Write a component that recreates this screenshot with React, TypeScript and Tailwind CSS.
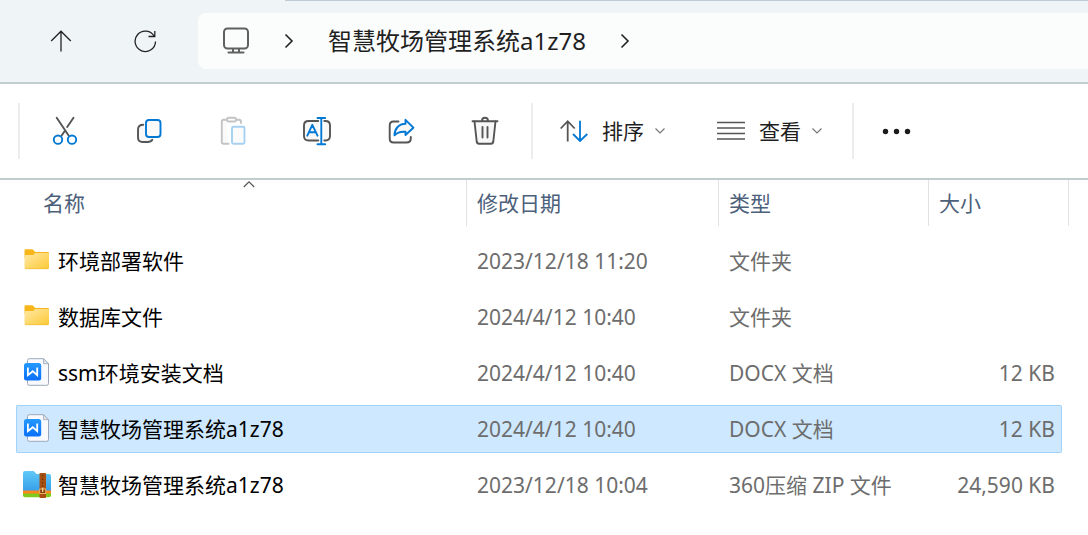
import type { ReactNode } from 'react'
import clsx from 'clsx'

type FileKind = 'folder' | 'docx' | 'zip'

type FileItem = {
  kind: FileKind
  name: string
  modified: string
  type: string
  size?: string
  selected?: boolean
}

const files: FileItem[] = [
  { kind: 'folder', name: '环境部署软件', modified: '2023/12/18 11:20', type: '文件夹' },
  { kind: 'folder', name: '数据库文件', modified: '2024/4/12 10:40', type: '文件夹' },
  { kind: 'docx', name: 'ssm环境安装文档', modified: '2024/4/12 10:40', type: 'DOCX 文档', size: '12 KB' },
  {
    kind: 'docx',
    name: '智慧牧场管理系统a1z78',
    modified: '2024/4/12 10:40',
    type: 'DOCX 文档',
    size: '12 KB',
    selected: true,
  },
  {
    kind: 'zip',
    name: '智慧牧场管理系统a1z78',
    modified: '2023/12/18 10:04',
    type: '360压缩 ZIP 文件',
    size: '24,590 KB',
  },
]

function ToolIcon({ children }: { children: ReactNode }) {
  return (
    <svg
      viewBox="0 0 32 32"
      className="size-8"
      fill="none"
      stroke="#555555"
      strokeWidth="1.9"
      strokeLinecap="round"
      strokeLinejoin="round"
      aria-hidden="true"
    >
      {children}
    </svg>
  )
}

const tools = [
  {
    label: '剪切',
    icon: (
      <ToolIcon>
        <path d="M7.7 2.8 19.8 20.8M24.5 2.8 18.2 12M15.4 16.4 12.5 20.8" />
        <circle cx="9" cy="24.7" r="4.2" stroke="#0078d4" />
        <circle cx="23" cy="24.7" r="4.2" stroke="#0078d4" />
      </ToolIcon>
    ),
  },
  {
    label: '复制',
    icon: (
      <ToolIcon>
        <path d="M10.3 9.8C7 9.8 5 11.5 5 14.5v8C5 25.5 6.5 27 9.5 27h5c2.5 0 4-.7 4.8-2.2" fill="#f8f8f8" />
        <rect x="13" y="5" width="14.5" height="17" rx="3" stroke="#0078d4" fill="#fafafa" />
      </ToolIcon>
    ),
  },
  {
    label: '粘贴',
    disabled: true,
    icon: (
      <ToolIcon>
        <g stroke="#c4c4c4">
          <path d="M9.5 4.7H6.5Q4.8 4.7 4.8 6.5V27Q4.8 28.8 6.5 28.8H11.5M19.5 4.7H22Q24 4.7 24 6.5V8" fill="#fafafa" />
          <rect x="10" y="2.7" width="9" height="3.8" rx="1.8" fill="#ffffff" />
        </g>
        <rect x="15" y="11.7" width="12.5" height="17" rx="1.5" stroke="#a6d1f2" fill="#fbfbfb" />
      </ToolIcon>
    ),
  },
  {
    label: '重命名',
    icon: (
      <ToolIcon>
        <path d="M17.3 6H7.5Q3 6 3 10.5V21Q3 25.5 7.5 25.5H17.3M23.3 6H24.5Q29 6 29 10.5V21Q29 25.5 24.5 25.5H23.3" fill="#f8f8f8" />
        <path d="M20.3 3V29.3M16.5 3H24.2M16.5 29.3H24.2M6.3 20.7 11.3 9.8 16.5 20.7M8 17.3H14.8" stroke="#0078d4" />
      </ToolIcon>
    ),
  },
  {
    label: '共享',
    icon: (
      <ToolIcon>
        <path d="M13.5 6.5H8.5Q4.7 6.5 4.7 10.5V23.5Q4.7 27.5 8.5 27.5H21.5Q25.8 27.5 25.8 23.5V22" />
        <path d="M20.5 4.8 28.4 12.7 20.5 20V16.8C15 16.3 12 17.8 9.5 20.3 9.5 14 13.5 9 20.5 8.8Z" stroke="#0078d4" fill="#f8f8f8" />
      </ToolIcon>
    ),
  },
  {
    label: '删除',
    icon: (
      <ToolIcon>
        <path d="M5.5 6.5 7.7 26.5Q8 28.7 10 28.7H22Q24 28.7 24.3 26.5L26.5 6.5" fill="#f8f8f8" />
        <path d="M3.5 6.3H28.5M13 6Q13 2.8 16 2.8T19 6M13.5 12V22.5M18.5 12V22.5" />
      </ToolIcon>
    ),
  },
]

function ChevronRight() {
  return (
    <svg viewBox="0 0 12 18" className="h-[18px] w-3" fill="none" stroke="#222222" strokeWidth="1.6" aria-hidden="true">
      <path d="M2.5 2.5 9 9 2.5 15.5" />
    </svg>
  )
}

function ChevronDown() {
  return (
    <svg viewBox="0 0 12 8" className="h-2 w-3" fill="none" stroke="#777777" strokeWidth="1.2" aria-hidden="true">
      <path d="M1.5 1.5 6 6 10.5 1.5" />
    </svg>
  )
}

function Divider() {
  return <div className="h-14 w-0.5 shrink-0 bg-[#ededed]" />
}

function FileIcon({ kind }: { kind: FileKind }) {
  if (kind === 'folder') {
    return (
      <svg viewBox="0 0 30 30" className="size-[30px] shrink-0" aria-hidden="true">
        <defs>
          <linearGradient id="folder-front" x1="0" y1="0" x2="1" y2="1">
            <stop offset="0" stopColor="#ffe9a6" />
            <stop offset="1" stopColor="#fdc936" />
          </linearGradient>
        </defs>
        <path d="M2.5 4.5Q2.5 3.2 4 3.2H10.5L13.3 6H26Q27 6 27 7V12H2.5Z" fill="#f9b61a" />
        <path d="M2.5 9H10.5Q11.5 9 12.2 8.2L13.3 7H26Q27 7 27 8V21.8Q27 23 25.8 23H3.7Q2.5 23 2.5 21.8Z" fill="url(#folder-front)" />
        <path d="M3 22.7H26.5" stroke="#efb92e" strokeWidth=".6" />
      </svg>
    )
  }
  if (kind === 'docx') {
    return (
      <svg viewBox="0 1 30 30" className="size-[30px] shrink-0" aria-hidden="true">
        <defs>
          <linearGradient id="doc-badge" x1="0" y1="0" x2="0" y2="1">
            <stop offset="0" stopColor="#2399ff" />
            <stop offset="1" stopColor="#0b70fa" />
          </linearGradient>
        </defs>
        <path d="M7.5 1.7H21.5L26.5 6.7V26.5Q26.5 28.3 24.7 28.3H7.3Q5.5 28.3 5.5 26.5V3.5Q5.5 1.7 7.5 1.7Z" fill="#f8faff" stroke="#9ba7b8" />
        <path d="M21.5 1.7V6.7H26.5Z" fill="#e1e6ed" stroke="#9ba7b8" strokeWidth=".8" />
        <rect x="2" y="6" width="17.2" height="17.5" rx="2.5" fill="url(#doc-badge)" />
        <path d="M5.9 10.6V18.2L10.8 14.2 15.2 18.2V10.6" fill="none" stroke="#ffffff" strokeWidth="1.8" />
      </svg>
    )
  }
  return (
    <svg viewBox="0 1 30 30" className="size-[30px] shrink-0" aria-hidden="true">
      <defs>
        <linearGradient id="zip-front" x1="0" y1="0" x2="0" y2="1">
          <stop offset="0" stopColor="#62c9f8" />
          <stop offset="1" stopColor="#37a0ea" />
        </linearGradient>
      </defs>
      <path d="M1 16H29V26.3Q29 28.3 27 28.3H3Q1 28.3 1 26.3Z" fill="#82c91e" />
      <path d="M1 16H29V23.5Q29 24.5 28 24.5H2Q1 24.5 1 23.5Z" fill="#ff861c" />
      <path d="M1 4Q1 2 3 2H11Q12 2 13 3.2L14.5 5H27Q29 5 29 7V21.5H1Z" fill="url(#zip-front)" />
      <rect x="17.5" y="4" width="6.5" height="25" rx=".8" fill="#a84f12" />
      <path d="M20.7 6V18" stroke="#5b2a09" strokeWidth="1" strokeDasharray="1.5 2" />
      <rect x="17.7" y="20" width="6" height="4.5" fill="#8a3f0d" stroke="#efc06c" strokeWidth=".9" />
      <path d="M20.7 18.5V23" stroke="#ffe0a0" strokeWidth="1.2" />
    </svg>
  )
}

function HeaderCell({ label }: { label: string }) {
  return (
    <th scope="col" className="h-[53px] p-0 align-top font-normal">
      <button type="button" className="flex h-[46px] w-full items-center border-r border-[#e2e2e2] px-2.5">
        {label}
      </button>
    </th>
  )
}

function FileRow({ file }: { file: FileItem }) {
  const cell = clsx(
    'flex h-12 items-center border-y',
    file.selected ? 'border-[#a0d2fb] bg-[#cde8ff]' : 'border-transparent',
  )

  return (
    <tr aria-selected={file.selected}>
      <td className="h-14 p-0">
        <div className={clsx(cell, 'gap-1.5 rounded-l-[2px] border-l pl-[5px] text-black')}>
          <FileIcon kind={file.kind} />
          {file.name}
        </div>
      </td>
      <td className="p-0">
        <div className={clsx(cell, 'px-2.5')}>{file.modified}</div>
      </td>
      <td className="p-0">
        <div className={clsx(cell, 'px-2.5')}>{file.type}</div>
      </td>
      <td className="p-0 pr-[7px]">
        <div className={clsx(cell, 'justify-end rounded-r-[2px] border-r pr-1.5')}>{file.size}</div>
      </td>
    </tr>
  )
}

export default function App() {
  return (
    <div className="min-h-screen bg-white font-['Noto_Sans','Noto_Sans_CJK_SC',sans-serif] text-[21px] leading-7 whitespace-nowrap text-[#6d6d6d]">
      <header className="border-b-2 border-[#c0cdd1] bg-[#eff4f7]">
        <div className="ml-[285px] h-px bg-[#bccbd4]" />
        <div className="flex items-center pt-3 pb-[13px] pl-[19px]">
          <button type="button" aria-label="向上" className="flex w-[84px] justify-center">
            <svg viewBox="0 0 24 24" className="size-6" fill="none" stroke="#222222" strokeWidth="1.3" aria-hidden="true">
              <path d="M12 22.5V2.5M2.2 12 12 2.2 21.8 12" />
            </svg>
          </button>
          <button type="button" aria-label="刷新" className="flex w-[84px] justify-center">
            <svg viewBox="0 0 24 24" className="size-6" fill="none" stroke="#222222" strokeWidth="1.3" aria-hidden="true">
              <path d="M21.3 7.5A10.2 10.2 0 1 0 22.5 12.5M21.8 2V7.5H15.5" />
            </svg>
          </button>
          <nav aria-label="地址" className="ml-[11px] flex h-14 grow items-center rounded-l-lg bg-[#fbfcfc] pl-6">
            <button type="button" aria-label="此电脑">
              <svg viewBox="0 0 28 28" className="size-7" fill="none" stroke="#606060" strokeWidth="2" strokeLinecap="round" aria-hidden="true">
                <rect x="2" y="1.5" width="24" height="20" rx="3.5" />
                <path d="M11 22V25.5M17 22V25.5M6.5 25.5H21.5" />
              </svg>
            </button>
            <span className="ml-[33px]">
              <ChevronRight />
            </span>
            <button type="button" className="ml-[33px] text-2xl text-[#1f1f1f]">
              智慧牧场管理系统a1z78
            </button>
            <span className="ml-[33px]">
              <ChevronRight />
            </span>
          </nav>
        </div>
      </header>

      <div role="toolbar" aria-label="命令栏" className="flex items-center border-b-2 border-[#c0cdcf] py-[19px] pl-[18px]">
        <Divider />
        <div className="flex pr-1 pl-[3px]">
          {tools.map((tool) => (
            <button
              key={tool.label}
              type="button"
              aria-label={tool.label}
              disabled={tool.disabled}
              className="flex w-[84px] justify-center"
            >
              {tool.icon}
            </button>
          ))}
        </div>
        <Divider />
        <div className="flex gap-[51px] pr-[29px] pl-[27px] text-[#1f1f1f]">
          <button type="button" className="flex items-center">
            <svg viewBox="0 0 28 28" className="size-7" fill="none" strokeWidth="1.8" aria-hidden="true">
              <path d="M7.7 24.5V4M.7 11.5 7.7 4.2 14.7 11.5" stroke="#555555" />
              <path d="M20 3.7V24M13 17 20 24 27.3 17" stroke="#0078d4" />
            </svg>
            <span className="mr-2.5 ml-3.5">排序</span>
            <ChevronDown />
          </button>
          <button type="button" className="flex items-center">
            <svg viewBox="0 0 28 28" className="size-7" fill="none" stroke="#555555" strokeWidth="1.7" aria-hidden="true">
              <path d="M0 5.5H28M0 11H28M0 16.5H28M0 22H28" />
            </svg>
            <span className="mr-2.5 ml-3.5">查看</span>
            <ChevronDown />
          </button>
        </div>
        <Divider />
        <button type="button" aria-label="查看更多" className="ml-[27px]">
          <svg viewBox="0 0 32 32" className="size-8" fill="#1b1b1b" aria-hidden="true">
            <circle cx="4.5" cy="16.5" r="2.7" />
            <circle cx="15.5" cy="16.5" r="2.7" />
            <circle cx="26.5" cy="16.5" r="2.7" />
          </svg>
        </button>
      </div>

      <main className="pr-[19px] pl-4">
        <table className="w-full table-fixed border-collapse text-left">
          <colgroup>
            <col />
            <col className="w-[252px]" />
            <col className="w-[210px]" />
            <col className="w-[140px]" />
          </colgroup>
          <thead className="text-[#4c607a]">
            <tr>
              <th scope="col" aria-sort="ascending" className="h-[53px] p-0 pl-4 align-top font-normal">
                <button
                  type="button"
                  className="relative flex h-[46px] w-full items-center border-r border-[#e2e2e2] px-[11px]"
                >
                  名称
                  <svg
                    viewBox="0 0 12 8"
                    className="absolute top-0 left-1/2 h-2 w-3 -translate-x-1/2"
                    fill="none"
                    stroke="#555555"
                    strokeWidth="1.2"
                    aria-hidden="true"
                  >
                    <path d="M.8 7 6 1.8 11.2 7" />
                  </svg>
                </button>
              </th>
              <HeaderCell label="修改日期" />
              <HeaderCell label="类型" />
              <HeaderCell label="大小" />
            </tr>
          </thead>
          <tbody>
            {files.map((file) => (
              <FileRow key={`${file.kind}-${file.name}`} file={file} />
            ))}
          </tbody>
        </table>
      </main>
    </div>
  )
}
